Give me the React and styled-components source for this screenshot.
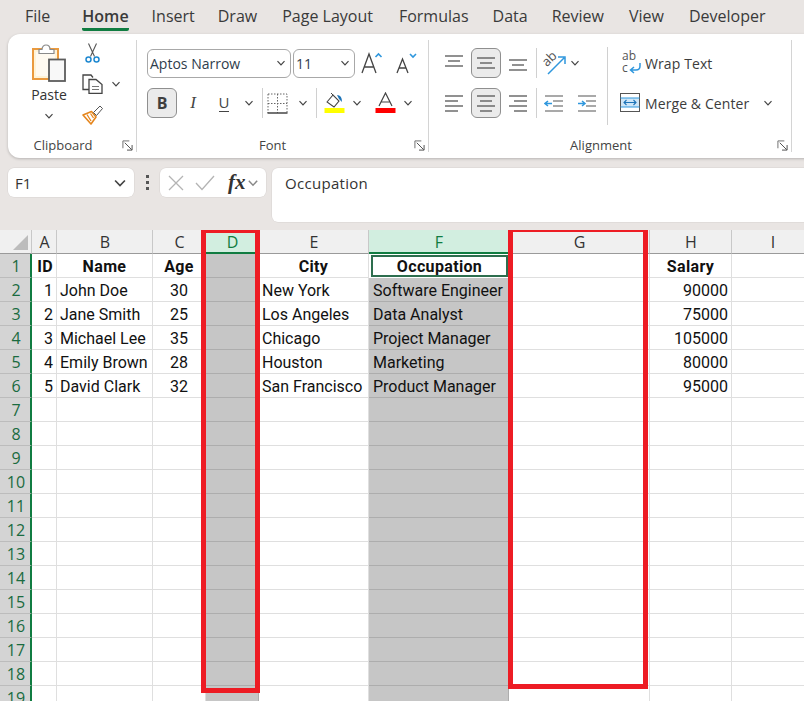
import React from "react";
import styled, { createGlobalStyle } from "styled-components";

const GlobalStyle = createGlobalStyle`
  html, body { margin: 0; padding: 0; background: #e9e5e3; }
  body { font-family: "Open Sans", "Noto Sans", sans-serif; }
`

const Page = styled.div`
  width: 804px;
  height: 701px;
  overflow: hidden;
  background: #e9e5e3;
  display: flex;
  flex-direction: column;
`

// tabs
const Tabs = styled.div`
  height: 34px;
  display: flex;
  padding-left: 25px;
  flex: none;
`
const Tab = styled.div`
  margin-left: ${p => p.$gap}px;
  height: 28px;
  line-height: 32px;
  font-size: 16px;
  color: #3a3a3a;
  white-space: nowrap;
  font-weight: ${p => p.$active ? 600 : 400};
  border-bottom: 3px solid ${p => p.$active ? "#107c41" : "transparent"};
  border-radius: 0 0 2px 2px;
`

// ribbon
const Ribbon = styled.div`
  flex: none;
  margin-left: 8px;
  width: 830px;
  height: 124px;
  background: #fff;
  border-radius: 12px;
  box-shadow: 0 1px 3px rgba(0,0,0,.22);
  display: flex;
`
const Group = styled.div`
  flex: none;
  width: ${p => p.$w}px;
  box-sizing: border-box;
  margin-top: 6px;
  height: 112px;
  border-right: 1px solid #d4d4d4;
  display: flex;
  flex-direction: column;
  position: relative;
`
const GroupBody = styled.div`
  flex: 1;
  display: flex;
  padding-left: ${p => p.$pad || 0}px;
  padding-top: ${p => p.$top || 0}px;
  min-height: 0;
`
const GroupLabel = styled.div`
  height: 20px;
  line-height: 20px;
  margin-bottom: -3px;
  font-size: 13px;
  color: #444;
  text-align: center;
  padding-right: ${p => p.$shift || 0}px;
`
const Launcher = styled.div`
  position: absolute;
  right: 3px;
  bottom: 1px;
  width: 11px;
  height: 11px;
  display: flex;
`
const PasteCol = styled.div`
  width: 62px;
  margin-left: 10px;
  display: flex;
  flex-direction: column;
  align-items: center;
`
const PasteLabel = styled.div`
  font-size: 14px;
  color: #333;
  line-height: 20px;
  margin: 3px 0 6px;
`
const SmallCol = styled.div`
  display: flex;
  flex-direction: column;
  margin-left: 2px;
  margin-top: -1px;
  gap: 11px;
`
const SmallRow = styled.div`
  display: flex;
  align-items: center;
  gap: 8px;
  padding-left: ${p => p.$pad || 0}px;
`
const Stack = styled.div`
  display: flex;
  flex-direction: column;
  gap: 10px;
`
const Row = styled.div`
  display: flex;
  align-items: center;
  height: 30px;
`
const SelectBox = styled.div`
  width: ${p => p.$w}px;
  margin-right: 2px;
  height: 29px;
  box-sizing: border-box;
  border: 1px solid #a8a8a8;
  border-radius: 6px;
  display: flex;
  align-items: center;
  justify-content: space-between;
  padding: 0 4px 0 2px;
  font-size: 14px;
  color: #2f3d4c;
`
const ToolButton = styled.div`
  width: 30px;
  height: 30px;
  box-sizing: border-box;
  display: flex;
  align-items: center;
  justify-content: center;
  flex: none;
  margin: ${p => p.$m || "0"};
  border-radius: 6px;
  border: 1px solid ${p => p.$on ? "#8f8f8f" : "transparent"};
  background: ${p => p.$on ? "#ebebeb" : "transparent"};
`
const BoldGlyph = styled.span`
  font: 700 16px "Open Sans", sans-serif;
  color: #3f3f3f;
`
const ItalicGlyph = styled.span`
  font: italic 400 17px "Liberation Serif", serif;
  color: #444;
`
const UnderGlyph = styled.span`
  font: 400 15px "Open Sans", sans-serif;
  color: #444;
  border-bottom: 1.5px solid #444;
  line-height: 17px;
`
const VLine = styled.div`
  width: 1px;
  height: ${p => p.$h || 30}px;
  background: #d0d0d0;
  flex: none;
  margin: ${p => p.$m || "0"};
`
const TextCommand = styled.div`
  display: flex;
  align-items: center;
  height: 30px;
  font-size: 14px;
  letter-spacing: .1px;
  color: #3c3c3c;
  white-space: nowrap;
`
const TextCommandIcon = styled.div`
  width: 25px;
  box-sizing: border-box;
  padding-left: ${p => p.$pad || 0}px;
  display: flex;
  flex: none;
`
const Spaced = styled.div`
  display: flex;
  align-items: center;
  margin-left: ${p => p.$m || 0}px;
  flex: none;
`

// formula bar
const FormulaBar = styled.div`
  flex: none;
  height: 54px;
  margin: 10px 0 8px 8px;
  display: flex;
  align-items: flex-start;
`
const NameBox = styled.div`
  width: 126px;
  height: 29px;
  box-sizing: border-box;
  background: #fff;
  border-radius: 6px;
  box-shadow: 0 0 0 .5px #d8d4d2;
  display: flex;
  align-items: center;
  justify-content: space-between;
  padding: 0 7px;
  font-size: 15px;
  color: #333;
`
const Dots = styled.div`
  width: 26px;
  height: 29px;
  display: flex;
  flex-direction: column;
  align-items: center;
  justify-content: center;
  gap: 3px;
  i { width: 3px; height: 3px; background: #555; display: block; }
`
const FnBox = styled.div`
  width: 106px;
  height: 29px;
  background: #fff;
  border-radius: 6px;
  box-shadow: 0 0 0 .5px #d8d4d2;
  display: flex;
  align-items: center;
  padding-left: 8px;
  box-sizing: border-box;
  gap: 11px;
`
const FxLabel = styled.span`
  font: italic 700 21px "Liberation Serif", serif;
  color: #333;
  margin-left: 2px;
  margin-right: -10px;
`
const FormulaInput = styled.div`
  margin-left: 6px;
  flex: 1;
  height: 54px;
  background: #fff;
  border-radius: 6px 0 0 6px;
  box-shadow: 0 0 0 .5px #d8d4d2;
  padding: 5px 13px;
  box-sizing: border-box;
  font-size: 15px;
  letter-spacing: .3px;
  color: #333;
`

// sheet
const Sheet = styled.div`
  position: relative;
  flex: 1;
  min-height: 0;
  overflow: hidden;
  background: #fff;
  display: grid;
  grid-template-columns: 32px 25px 96px 53px 53px 110px 140px 141px 82px 82px;
  grid-auto-rows: 24px;
  font-family: "Roboto", sans-serif;
  font-size: 16px;
  color: #111;
`
const Corner = styled.div`
  background: #f0f0f0;
  border-right: 1px solid #c8c8c8;
  border-bottom: 1px solid #9a9a9a;
  box-sizing: border-box;
  position: relative;
  &::after {
    content: "";
    position: absolute;
    right: 3px;
    bottom: 3px;
    border-style: solid;
    border-width: 0 0 15px 15px;
    border-color: transparent transparent #bcbcbc transparent;
  }
`
const ColHead = styled.div`
  box-sizing: border-box;
  background: ${p => p.$sel ? "#d2eee0" : "#f0f0f0"};
  color: ${p => p.$sel ? "#107c41" : "#333"};
  border-right: 1px solid ${p => p.$sel ? "#d2eee0" : "#c8c8c8"};
  border-bottom: ${p => p.$sel ? "2px solid #107c41" : "1px solid #9a9a9a"};
  padding-left: 1px;
  text-align: center;
  line-height: 24px;
  font-family: "Open Sans", sans-serif;
  font-size: 16px;
`
const RowHead = styled.div`
  box-sizing: border-box;
  background: #d4d4d4;
  color: #1a6b40;
  border-right: 2px solid #107c41;
  border-bottom: 1px solid #bcbcbc;
  text-align: center;
  line-height: 25px;
  font-family: "Open Sans", sans-serif;
  font-size: 16px;
  padding-left: 2px;
`
const Cell = styled.div`
  box-sizing: border-box;
  background: ${p => p.$sel ? "#c6c6c6" : "#fff"};
  border-right: 1px solid ${p => p.$sel ? "#adadad" : "#dfdfdf"};
  border-bottom: 1px solid ${p => p.$sel ? "#adadad" : "#dfdfdf"};
  padding: 0 ${p => p.$pad || 3}px;
  line-height: 25px;
  white-space: nowrap;
  overflow: hidden;
  text-align: ${p => p.$align || "left"};
  font-weight: ${p => p.$bold ? 700 : 400};
  letter-spacing: ${p => p.$bold ? ".35px" : "0"};
`
const ActiveCell = styled(Cell)`
  background: #fff;
  border: 2px solid #2d6e4e;
  line-height: 20px;
  margin: 1px 1px 1px 2px;
`
const RedBox = styled.div`
  position: absolute;
  box-sizing: border-box;
  left: ${p => p.$x}px;
  top: ${p => p.$y}px;
  width: ${p => p.$w}px;
  height: ${p => p.$h}px;
  border: 5px solid #ed1c24;
  pointer-events: none;
`

// icons
const Chevron = ({ size = 10, color = "#444" }) => (
  <svg width={size} height={size} viewBox="0 0 10 10" style={{ flex: "none" }}>
    <path d="M1.5 3.2 5 6.8 8.5 3.2" fill="none" stroke={color} strokeWidth="1.2" />
  </svg>
)
const LauncherIcon = () => (
  <svg width="11" height="11" viewBox="0 0 12 12">
    <path d="M8 1H1v8" fill="none" stroke="#666" />
    <path d="M3 3 10.5 10.5M5.5 11H11V5.5" fill="none" stroke="#444" />
  </svg>
)
const PasteIcon = () => (
  <svg width="36" height="38" viewBox="0 0 36 38">
    <rect x="2" y="5" width="25" height="30" fill="#fff3d6" stroke="#ea9a3e" strokeWidth="2" />
    <rect x="5" y="8" width="19" height="24" fill="#fffaf0" />
    <path d="M11 5.5C11 -0.5 19 -0.5 19 5.5H23V9.5H8V5.5Z" fill="#fff" stroke="#8a8a8a" strokeWidth="1.2" />
    <rect x="18" y="15.5" width="16" height="21.5" fill="#f8f8f8" stroke="#5c5c5c" strokeWidth="1.8" />
  </svg>
)
const ScissorsIcon = () => (
  <svg width="15" height="20" viewBox="0 0 15 20">
    <path d="M3.5 0.5 9.5 13.5M11.5 0.5 5.5 13.5" fill="none" stroke="#555" strokeWidth="1.1" />
    <circle cx="3.5" cy="16.5" r="2.5" fill="none" stroke="#1e88d0" strokeWidth="1.5" />
    <circle cx="11.5" cy="16.5" r="2.5" fill="none" stroke="#1e88d0" strokeWidth="1.5" />
  </svg>
)
const CopyIcon = () => (
  <svg width="21" height="20" viewBox="0 0 21 20">
    <path d="M7 15.5H1V1H9L11 3.5" fill="none" stroke="#444" strokeWidth="1.3" />
    <path d="M7 5.5H14L20 10.5V19.5H7Z" fill="#fff" stroke="#444" strokeWidth="1.3" />
    <path d="M10 12.5h7M10 15.5h7" stroke="#777" />
  </svg>
)
const BrushIcon = () => (
  <svg width="21" height="20" viewBox="0 0 21 20">
    <path d="M1 10 9.5 6.5 14 12 9 19Z" fill="#fff" stroke="#e5861e" strokeWidth="1.6" strokeLinejoin="round" />
    <path d="M5 9.5 9 16M8.5 8.5 11.5 13" stroke="#e5861e" strokeWidth="1.3" />
    <path d="M11.5 7.5 18 1 20.5 3.5 14.5 10.5Z" fill="#fff" stroke="#555" />
  </svg>
)
const GrowIcon = ({ up }) => (
  <svg width="23" height="24" viewBox="0 0 23 24">
    <path d={up ? "M1 22 8 3 15 22M3.5 16H12.5" : "M1 22 6.5 8 12 22M3 17H10"} fill="none" stroke="#444" strokeWidth="1.3" />
    <path d={up ? "M14.5 6 17.5 3 20.5 6" : "M14 3 17 6 20 3"} fill="none" stroke="#2f97dd" strokeWidth="1.6" />
  </svg>
)
const BorderIcon = () => (
  <svg width="21" height="21" viewBox="0 0 21 21">
    <path d="M1 1H20V20M1 1V20M10.5 1V20M1 10.5H20" fill="none" stroke="#666" strokeDasharray="1.5 1.5" />
    <path d="M0.5 20H20.5" stroke="#444" strokeWidth="1.5" />
  </svg>
)
const FillIcon = () => (
  <svg width="21" height="22" viewBox="0 0 21 22">
    <path d="M3 10 9 3 15 9 10 15Z" fill="#fff" stroke="#444" strokeWidth="1.1" />
    <path d="M7 1 9 3" stroke="#444" />
    <path d="M13 3 Q18 3 18 10 L15 7Z" fill="#1e74b8" />
    <rect x="0.5" y="16" width="20" height="5" fill="#ffff00" />
  </svg>
)
const ColorAIcon = () => (
  <svg width="21" height="22" viewBox="0 0 21 22">
    <path d="M4 14 10.5 1 17 14M6 10H15" fill="none" stroke="#444" strokeWidth="1.2" />
    <rect x="0.5" y="16" width="20" height="5" fill="#ff0000" />
  </svg>
)
// lines for the alignment buttons, each is [from, to, y]
const AlignLines = ({ lines }) => (
  <svg width="20" height="20" viewBox="0 0 20 20">
    {lines.map(([a, b, y]) => (
      <path key={`${a}-${y}`} d={`M${a} ${y}H${b}`} stroke="#555" strokeWidth="1.3" />
    ))}
  </svg>
)
const alignIcons = {
  top: [[1, 19, 3], [4, 16, 8], [1, 19, 13]],
  middle: [[1, 19, 5], [4, 16, 10], [1, 19, 15]],
  bottom: [[1, 19, 7], [4, 16, 12], [1, 19, 17]],
  left: [[1, 19, 3], [1, 14, 8], [1, 19, 13], [1, 14, 18]],
  center: [[1, 19, 3], [4, 16, 8], [1, 19, 13], [4, 16, 18]],
  right: [[1, 19, 3], [6, 19, 8], [1, 19, 13], [6, 19, 18]],
}
const OrientIcon = () => (
  <svg width="23" height="23" viewBox="0 0 23 23" overflow="visible">
    <path d="M5 22 21 6M15 5H22V12" fill="none" stroke="#2f97dd" strokeWidth="1.5" />
    <text x="0" y="12" fontSize="13" fill="#555" fontFamily="Open Sans" transform="rotate(-45 6 9)">ab</text>
  </svg>
)
const IndentIcon = ({ out }) => (
  <svg width="20" height="20" viewBox="0 0 20 20">
    <path d="M1 3H19M9 8H19M9 13H19M1 18H19" stroke="#555" strokeWidth="1.2" />
    <path d={out ? "M8 10.5H1M4 8 1 10.5 4 13" : "M1 10.5H8M5 8 8 10.5 5 13"} fill="none" stroke="#2f97dd" strokeWidth="1.5" />
  </svg>
)
const WrapIcon = () => (
  <svg width="20" height="24" viewBox="0 0 20 24" overflow="visible">
    <text x="0" y="9" fontSize="12" fill="#555" fontFamily="Open Sans">ab</text>
    <text x="0" y="21" fontSize="12" fill="#555" fontFamily="Open Sans">c</text>
    <path d="M18 12V15Q18 19 14 19H9M12 16 8.5 19 12 22" fill="none" stroke="#2f97dd" strokeWidth="1.5" />
  </svg>
)
const MergeIcon = () => (
  <svg width="20" height="20" viewBox="0 0 20 20">
    <rect x="0.5" y="0.5" width="19" height="18" fill="#fff" stroke="#555" />
    <rect x="1" y="5" width="18" height="9" fill="#cfe6f7" />
    <path d="M0.5 5H19.5M0.5 14H19.5" stroke="#2f97dd" />
    <path d="M4 9.5H16M6.5 7 4 9.5 6.5 12M13.5 7 16 9.5 13.5 12" fill="none" stroke="#1e74b8" strokeWidth="1.1" />
  </svg>
)
const CrossIcon = () => (
  <svg width="16" height="16" viewBox="0 0 16 16">
    <path d="M1 1 15 15M15 1 1 15" stroke="#b4b4b4" strokeWidth="1.3" />
  </svg>
)
const CheckIcon = () => (
  <svg width="20" height="16" viewBox="0 0 20 16">
    <path d="M1 8 7 14.5 19 1" fill="none" stroke="#b4b4b4" strokeWidth="1.3" />
  </svg>
)

const tabs = [
  ["File", 0], ["Home", 32], ["Insert", 23], ["Draw", 23], ["Page Layout", 25],
  ["Formulas", 26], ["Data", 24], ["Review", 24], ["View", 25], ["Developer", 25],
]
const columns = ["A", "B", "C", "D", "E", "F", "G", "H", "I"]
const selectedCols = ["D", "F"]
const rightCols = ["A", "C", "H"]
const people = [
  ["ID", "Name", "Age", "", "City", "Occupation", "", "Salary", ""],
  ["1", "John Doe", "30", "", "New York", "Software Engineer", "", "90000", ""],
  ["2", "Jane Smith", "25", "", "Los Angeles", "Data Analyst", "", "75000", ""],
  ["3", "Michael Lee", "35", "", "Chicago", "Project Manager", "", "105000", ""],
  ["4", "Emily Brown", "28", "", "Houston", "Marketing", "", "80000", ""],
  ["5", "David Clark", "32", "", "San Francisco", "Product Manager", "", "95000", ""],
]
const rowNumbers = Array.from({ length: 19 }, (_, i) => i + 1)

function cellAlign(col, rowIndex) {
  if (rowIndex === 0) return col === "A" ? "right" : "center"
  if (col === "C") return "center"
  return rightCols.includes(col) ? "right" : "left"
}

function SheetGrid() {
  return (
    <Sheet>
      <Corner />
      {columns.map(c => <ColHead key={c} $sel={selectedCols.includes(c)}>{c}</ColHead>)}
      {rowNumbers.map((n, r) => (
        <React.Fragment key={n}>
          <RowHead>{n}</RowHead>
          {columns.map((c, i) => {
            const value = people[r] ? people[r][i] : ""
            if (c === "F" && r === 0) return <ActiveCell key={c} $align="center" $bold>{value}</ActiveCell>
            return (
              <Cell key={c} $sel={selectedCols.includes(c)} $align={cellAlign(c, r)} $bold={r === 0} $pad={c === "F" ? 4 : 3}>
                {value}
              </Cell>
            )
          })}
        </React.Fragment>
      ))}
      <RedBox $x={201} $y={-2} $w={59} $h={465} />
      <RedBox $x={508} $y={-3} $w={140} $h={462} />
    </Sheet>
  )
}

export default function App() {
  return (
    <Page>
      <GlobalStyle />
      <Tabs>
        {tabs.map(([name, gap]) => <Tab key={name} $gap={gap} $active={name === "Home"}>{name}</Tab>)}
      </Tabs>
      <Ribbon>
        <Group $w={129}>
          <GroupBody $top={4}>
            <PasteCol>
              <PasteIcon />
              <PasteLabel>Paste</PasteLabel>
              <Chevron />
            </PasteCol>
            <SmallCol>
              <SmallRow $pad={3}><ScissorsIcon /></SmallRow>
              <SmallRow><CopyIcon /><Chevron /></SmallRow>
              <SmallRow><BrushIcon /></SmallRow>
            </SmallCol>
          </GroupBody>
          <GroupLabel $shift={18}>Clipboard</GroupLabel>
          <Launcher><LauncherIcon /></Launcher>
        </Group>
        <Group $w={292}>
          <GroupBody $pad={10} $top={8}>
            <Stack>
              <Row>
                <SelectBox $w={144}>Aptos Narrow<Chevron /></SelectBox>
                <SelectBox $w={62}>11<Chevron /></SelectBox>
                <Spaced $m={4}><GrowIcon up /></Spaced>
                <Spaced $m={12}><GrowIcon /></Spaced>
              </Row>
              <Row>
                <ToolButton $on><BoldGlyph>B</BoldGlyph></ToolButton>
                <ToolButton $m="0 1px 0 1px"><ItalicGlyph>I</ItalicGlyph></ToolButton>
                <ToolButton><UnderGlyph>U</UnderGlyph></ToolButton>
                <Spaced $m={5}><Chevron /></Spaced>
                <VLine $m="0 4px 0 8px" />
                <BorderIcon />
                <Spaced $m={10}><Chevron /></Spaced>
                <VLine $m="0 7px 0 8px" />
                <FillIcon />
                <Spaced $m={7}><Chevron /></Spaced>
                <Spaced $m={13}><ColorAIcon /></Spaced>
                <Spaced $m={7}><Chevron /></Spaced>
              </Row>
            </Stack>
          </GroupBody>
          <GroupLabel $shift={20}>Font</GroupLabel>
          <Launcher><LauncherIcon /></Launcher>
        </Group>
        <Group $w={363}>
          <GroupBody $pad={15} $top={8}>
            <Stack>
              <Row>
                <AlignLines lines={alignIcons.top} />
                <ToolButton $on $m="0 7px 0 7px"><AlignLines lines={alignIcons.middle} /></ToolButton>
                <AlignLines lines={alignIcons.bottom} />
                <VLine $m="0 6px 0 8px" />
                <OrientIcon />
                <Spaced $m={4}><Chevron /></Spaced>
              </Row>
              <Row>
                <AlignLines lines={alignIcons.left} />
                <ToolButton $on $m="0 7px 0 7px"><AlignLines lines={alignIcons.center} /></ToolButton>
                <AlignLines lines={alignIcons.right} />
                <VLine $m="0 7px 0 8px" />
                <IndentIcon out />
                <Spaced $m={13}><IndentIcon /></Spaced>
              </Row>
            </Stack>
            <VLine $h={78} $m="-1px 12px 0 10px" />
            <Stack>
              <TextCommand><TextCommandIcon $pad={2}><WrapIcon /></TextCommandIcon>Wrap Text</TextCommand>
              <TextCommand>
                <TextCommandIcon><MergeIcon /></TextCommandIcon>Merge &amp; Center
                <Spaced $m={14}><Chevron /></Spaced>
              </TextCommand>
            </Stack>
          </GroupBody>
          <GroupLabel $shift={18}>Alignment</GroupLabel>
          <Launcher><LauncherIcon /></Launcher>
        </Group>
      </Ribbon>
      <FormulaBar>
        <NameBox>F1<Chevron size={14} /></NameBox>
        <Dots><i /><i /><i /></Dots>
        <FnBox>
          <CrossIcon />
          <CheckIcon />
          <FxLabel>fx</FxLabel>
          <Chevron size={12} color="#888" />
        </FnBox>
        <FormulaInput>Occupation</FormulaInput>
      </FormulaBar>
      <SheetGrid />
    </Page>
  )
}
